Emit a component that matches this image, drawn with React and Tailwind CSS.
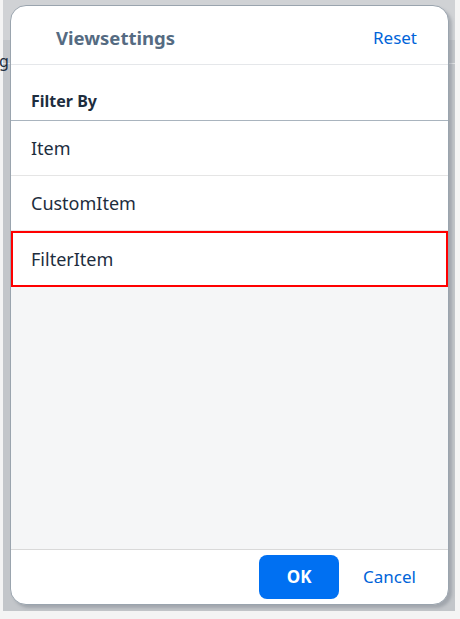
import React from "react";

const items = ["Item", "CustomItem", "FilterItem"];

export default function App() {
  const selected = "FilterItem";

  return (
    <div
      className="relative h-[619px] w-[460px] overflow-hidden bg-[#f4f4f4]"
      style={{ fontFamily: '"Noto Sans", "Open Sans", sans-serif' }}
    >
      {/* Page behind the overlay */}
      <div className="absolute left-[3px] top-0 h-[611px] w-[452px] bg-[#c3c6ca]">
        <div className="h-[40px] bg-[#d0d2d5]" />
        <div className="relative h-[24px] border-b border-[#e2e3e5]">
          <span className="absolute -left-[4px] top-[9px] text-[16px] text-[#1d2d3e]">g</span>
        </div>
      </div>

      {/* Dialog */}
      <div className="absolute left-[10px] top-[5px] flex h-[600px] w-[439px] flex-col overflow-hidden rounded-[16px] border border-[#9aa4ae] bg-white shadow-[3px_3px_3px_rgba(100,110,120,0.35)]">
        {/* Header */}
        <div className="flex h-[59px] shrink-0 items-center justify-between border-b border-[#e5e7ea] pl-[45px] pr-[31px] pt-[5px] shadow-[0_2px_2px_rgba(0,0,0,0.06)]">
          <span className="text-[18.5px] font-bold text-[#556b82]">Viewsettings</span>
          <button className="text-[17px] text-[#0064d9]">Reset</button>
        </div>

        {/* List */}
        <div className="flex flex-1 flex-col bg-[#f5f6f7]">
          <div className="flex h-[56px] items-end border-b border-[#a9b4be] bg-white px-[20px] pb-[7px]">
            <span className="text-[16px] font-bold text-[#1d2d3e]">Filter By</span>
          </div>
          {items.map((item) =>
            item === selected ? (
              <div
                key={item}
                className="flex h-[56px] items-center border-2 border-[#ff0000] bg-white px-[18px] text-[18px] text-[#1d2d3e]"
              >
                {item}
              </div>
            ) : (
              <div
                key={item}
                className="flex h-[55px] items-center border-b border-[#e5e5e5] bg-white px-[20px] text-[18px] text-[#1d2d3e]"
              >
                {item}
              </div>
            )
          )}
        </div>

        {/* Footer */}
        <div className="flex h-[55px] shrink-0 items-center justify-end gap-[24px] border-t border-[#d9d9d9] pr-[32px]">
          <button className="h-[44px] w-[80px] rounded-[8px] bg-[#0070f2] text-[17px] font-bold text-white">
            OK
          </button>
          <button className="text-[17px] text-[#0064d9]">Cancel</button>
        </div>
      </div>
    </div>
  );
}
